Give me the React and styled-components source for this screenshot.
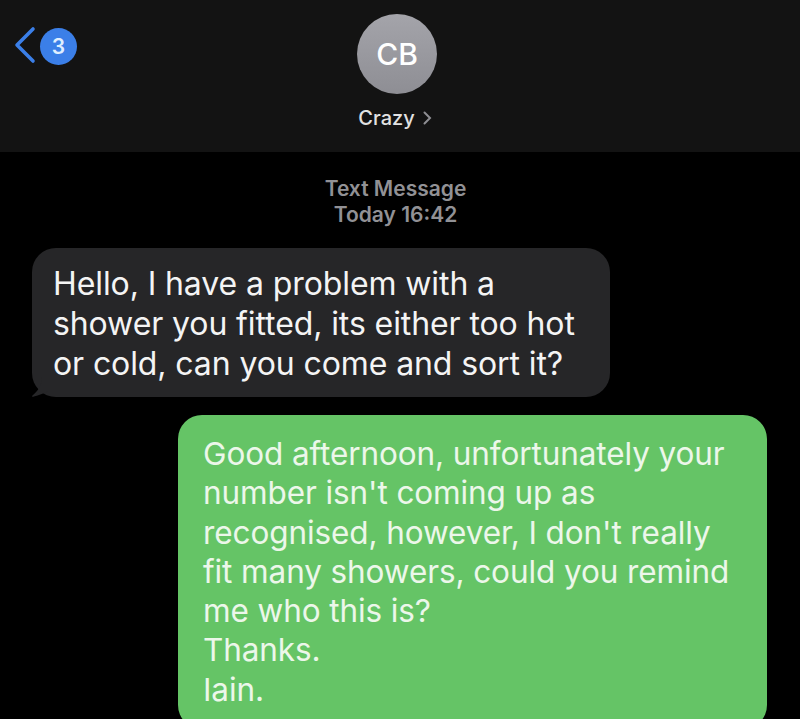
import React from 'react';
import styled, { createGlobalStyle } from 'styled-components';

const GlobalStyle = createGlobalStyle`
    html, body {
        margin: 0;
        padding: 0;
        background: #000;
        height: 719px;
        overflow: hidden;
    }
    body {
        font-family: Inter, "Liberation Sans", sans-serif;
        -webkit-font-smoothing: antialiased;
    }
`;

const Screen = styled.div`
    width: 800px;
    height: 719px;
    background: #000;
    overflow: hidden;
    display: flex;
    flex-direction: column;
`;

const Header = styled.div`
    position: relative;
    flex-shrink: 0;
    height: 152px;
    background: #131313;
    display: flex;
    flex-direction: column;
    align-items: center;
    padding: 14px 6px 0 0;
    box-sizing: border-box;
`;

const Back = styled.div`
    position: absolute;
    left: 13px;
    top: 25px;
    display: flex;
    align-items: center;
    gap: 3px;
`;

const Badge = styled.div`
    width: 37px;
    height: 37px;
    margin-top: 3px;
    border-radius: 50%;
    background: #3b7fe8;
    color: #dfeeff;
    font-size: 21px;
    font-weight: 600;
    display: flex;
    align-items: center;
    justify-content: center;
`;

const Avatar = styled.div`
    width: 80px;
    height: 80px;
    border-radius: 50%;
    background: linear-gradient(#a4a4aa, #8e8e94);
    color: #fff;
    font-size: 30px;
    font-weight: 500;
    display: flex;
    align-items: center;
    justify-content: center;
`;

const Name = styled.div`
    margin-top: 12px;
    color: #e2e2e2;
    font-size: 20px;
    font-weight: 500;
    line-height: 24px;
    display: flex;
    align-items: center;
    gap: 8px;
    padding-right: 4px;
`;

const Thread = styled.div`
    flex: 1;
    display: flex;
    flex-direction: column;
    padding: 24px 33px 0 32px;
`;

const Stamp = styled.div`
    align-self: center;
    text-align: center;
    color: #919195;
    font-size: 21px;
    font-weight: 600;
    line-height: 26px;
    margin-left: -8px;
`;

const Bubble = styled.div`
    position: relative;
    box-sizing: border-box;
    border-radius: 24px;
    white-space: nowrap;
    letter-spacing: -0.1px;
    background: ${p => p.sent ? '#65c466' : '#262628'};
    color: ${p => p.sent ? '#ecf7ea' : '#f4f4f4'};
    align-self: ${p => p.sent ? 'flex-end' : 'flex-start'};
    width: ${p => p.w}px;
    font-size: ${p => p.fs}px;
    line-height: ${p => p.lh}px;
    padding: ${p => p.sent ? '19px 20px 20px 25px' : '16px 20px 13px 21px'};
    margin-top: ${p => p.mt}px;
`;

const Tail = styled.svg`
    position: absolute;
    left: -14px;
    bottom: 0;
`;

function Chevron({ color }) {
    return (
        <svg width="24" height="40" viewBox="0 0 24 40">
            <path d="M20 4 L4 20 L20 36" fill="none" stroke={color} strokeWidth="3.6" strokeLinecap="round" strokeLinejoin="round" />
        </svg>
    );
}

function App() {
    return (
        <Screen>
            <GlobalStyle />
            <Header>
                <Back>
                    <Chevron color="#3b7fe8" />
                    <Badge>3</Badge>
                </Back>
                <Avatar>CB</Avatar>
                <Name>
                    Crazy
                    <svg width="9" height="14" viewBox="0 0 9 14">
                        <path d="M1.5 1.5 L7 7 L1.5 12.5" fill="none" stroke="#8e8e93" strokeWidth="2" strokeLinecap="round" />
                    </svg>
                </Name>
            </Header>
            <Thread>
                <Stamp>
                    Text Message<br />Today 16:42
                </Stamp>
                <Bubble w={578} fs={32} lh={40} mt={20}>
                    <Tail width="30" height="20" viewBox="0 0 30 20">
                        <path d="M24 0 C24 8 20 14 14 19 C14 20 15 20 16 19.5 C21 18 25 17 30 14 L30 0 Z" fill="#262628" />
                    </Tail>
                    Hello, I have a problem with a<br />
                    shower you fitted, its either too hot<br />
                    or cold, can you come and sort it?
                </Bubble>
                <Bubble sent w={589} fs={31.5} lh={39.3} mt={18}>
                    Good afternoon, unfortunately your<br />
                    number isn't coming up as<br />
                    recognised, however, I don't really<br />
                    fit many showers, could you remind<br />
                    me who this is?<br />
                    Thanks.<br />
                    Iain.
                </Bubble>
            </Thread>
        </Screen>
    );
}

export default App;
